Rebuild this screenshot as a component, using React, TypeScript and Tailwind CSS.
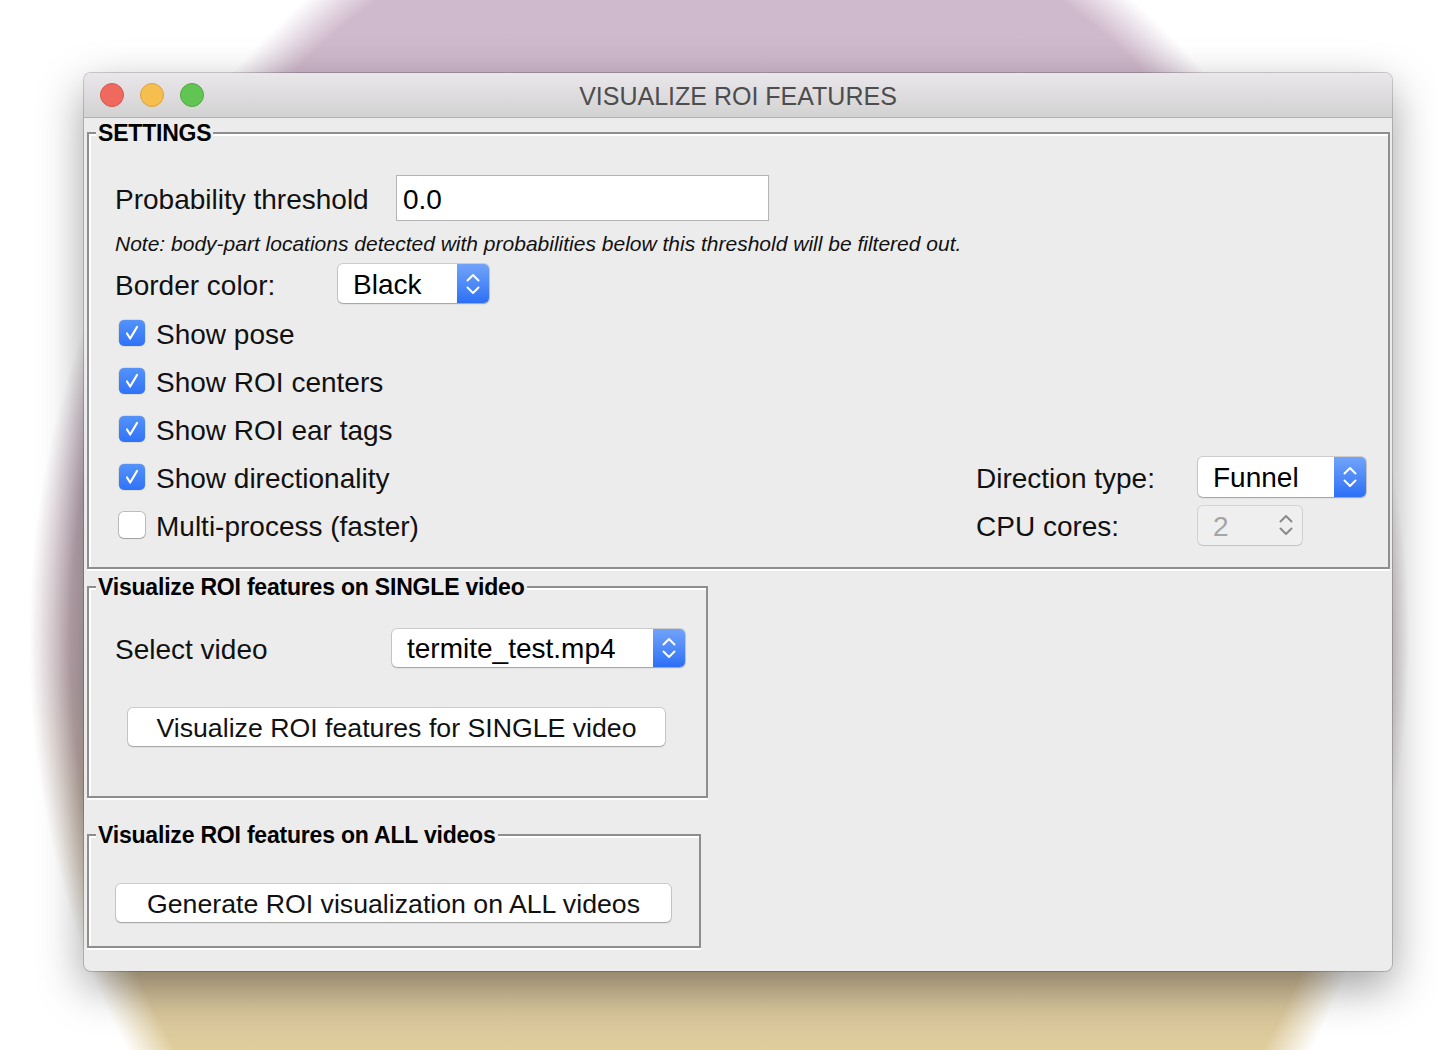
import React from "react";

const font = "font-['Liberation_Sans',Arial,sans-serif]";
const label = "pt-[4px] text-[28px] leading-none text-[#111]";

const Chevrons = ({ color = "#ffffff" }: { color?: string }) => (
  <svg width="14" height="24" viewBox="0 0 14 24" fill="none">
    <path d="M1.5 8.5 L7 3 L12.5 8.5" stroke={color} strokeWidth="2" strokeLinecap="round" strokeLinejoin="round" />
    <path d="M1.5 15.5 L7 21 L12.5 15.5" stroke={color} strokeWidth="2" strokeLinecap="round" strokeLinejoin="round" />
  </svg>
);

const Dropdown = ({ value, className }: { value: string; className: string }) => (
  <div
    className={
      "flex items-stretch rounded-[5px] bg-white shadow-[0_0_0_1px_rgba(0,0,0,0.13),0_1px_1.5px_rgba(0,0,0,0.22)] " +
      className
    }
  >
    <div className="flex flex-1 items-center pl-[15px] pt-[2px] text-[28px] leading-none text-black">{value}</div>
    <div className="flex w-[32px] items-center justify-center rounded-r-[5px] bg-gradient-to-b from-[#71a3f8] to-[#2c6ff6]">
      <Chevrons />
    </div>
  </div>
);

const Checkbox = ({ checked, text }: { checked: boolean; text: string }) => (
  <div className="flex items-center gap-[11px] pl-[6px]">
    {checked ? (
      <div className="flex h-[26px] w-[26px] items-center justify-center rounded-[5px] bg-gradient-to-b from-[#5592f8] to-[#2f72f6] shadow-[0_0_0_0.5px_rgba(0,0,0,0.15)]">
        <svg width="26" height="26" viewBox="0 0 26 26" fill="none">
          <path d="M8 13.5 L11.2 18.5 L18 7" stroke="#fff" strokeWidth="2.2" strokeLinecap="round" strokeLinejoin="round" />
        </svg>
      </div>
    ) : (
      <div className="h-[26px] w-[26px] rounded-[5px] bg-white shadow-[0_0_0_1px_rgba(0,0,0,0.2),0_1px_1px_rgba(0,0,0,0.15)]" />
    )}
    <span className={label}>{text}</span>
  </div>
);

const Group = ({
  title,
  className,
  children,
}: {
  title: string;
  className: string;
  children: React.ReactNode;
}) => (
  <fieldset
    className={
      "border-2 border-[#8e8e8e] shadow-[inset_2px_2px_0_#ffffff,0_2px_0_#ffffff] " + className
    }
  >
    <legend className="ml-[7px] bg-[#ececec] px-[2px] text-[23px] font-bold leading-[26px] tracking-[-0.2px] text-black">
      {title}
    </legend>
    {children}
  </fieldset>
);

const Button = ({ text, className }: { text: string; className: string }) => (
  <button
    type="button"
    className={
      "flex h-[38px] items-center justify-center rounded-[5px] bg-white pt-[3px] text-[26.7px] leading-none text-[#111] shadow-[0_0_0_1px_rgba(0,0,0,0.13),0_1px_1.5px_rgba(0,0,0,0.22)] " +
      className
    }
  >
    {text}
  </button>
);

export default function App() {
  return (
    <div
      className={
        "h-[1050px] w-[1438px] overflow-hidden bg-white bg-[image:radial-gradient(ellipse_690px_800px_at_719px_640px,transparent_94%,#ffffff_100%),linear-gradient(180deg,#cfb9cd_0%,#c9b3c5_35%,#bca8ad_65%,#c9b79f_85%,#e0cd9c_100%)] pl-[84px] pt-[73px] " +
        font
      }
    >
      {/* Window */}
      <div className="h-[898px] w-[1308px] overflow-hidden rounded-[7px] bg-[#ececec] shadow-[0_0_0_1px_rgba(0,0,0,0.18),0_16px_45px_rgba(0,0,0,0.38)]">
        {/* Title bar */}
        <div className="flex h-[45px] items-center border-b border-[#b1b1b1] bg-gradient-to-b from-[#e9e7e9] to-[#d3d2d3] pl-[16px]">
          <div className="flex gap-[16px]">
            <span className="h-[24px] w-[24px] rounded-full border border-[#d9574b] bg-[#ee6a5f]" />
            <span className="h-[24px] w-[24px] rounded-full border border-[#dba340] bg-[#f5be4f]" />
            <span className="h-[24px] w-[24px] rounded-full border border-[#52a942] bg-[#61c554]" />
          </div>
          <div className="flex-1 pr-[120px] pt-[3px] text-center text-[25px] leading-none text-[#4d4d4d]">
            VISUALIZE ROI FEATURES
          </div>
        </div>

        {/* SETTINGS */}
        <Group title="SETTINGS" className="ml-[3px] mt-[2px] w-[1303px]">
          <div className="pb-[18px] pl-[24px] pr-[22px]">
            <div className="mt-[29px] flex h-[46px] items-center">
              <span className={"w-[283px] pl-[2px] " + label}>Probability threshold</span>
              <div className="flex h-[46px] w-[373px] items-center border border-[#b4b4b4] bg-white pl-[6px] pt-[3px] text-[28px] leading-none text-black">
                0.0
              </div>
            </div>
            <p className="mt-[11px] pl-[2px] text-[21px] italic leading-[24px] text-[#111]">
              Note: body-part locations detected with probabilities below this threshold will be filtered out.
            </p>
            <div className="mt-[8px] flex h-[39px] items-center">
              <span className={"w-[225px] pl-[2px] " + label}>Border color:</span>
              <Dropdown value="Black" className="h-[39px] w-[151px]" />
            </div>

            <div className="mt-[6px] flex flex-col">
              <div className="flex h-[48px] items-center">
                <Checkbox checked text="Show pose" />
              </div>
              <div className="flex h-[48px] items-center">
                <Checkbox checked text="Show ROI centers" />
              </div>
              <div className="flex h-[48px] items-center">
                <Checkbox checked text="Show ROI ear tags" />
              </div>
              <div className="flex h-[48px] items-center justify-between">
                <Checkbox checked text="Show directionality" />
                <div className="flex items-center">
                  <span className={"w-[222px] " + label}>Direction type:</span>
                  <Dropdown value="Funnel" className="h-[40px] w-[168px]" />
                </div>
              </div>
              <div className="flex h-[48px] items-center justify-between">
                <Checkbox checked={false} text="Multi-process (faster)" />
                <div className="flex w-[390px] items-center">
                  <span className={"w-[222px] " + label}>CPU cores:</span>
                  <div className="flex h-[39px] w-[104px] items-center justify-between rounded-[5px] bg-[#efefef] pl-[15px] pr-[9px] shadow-[0_0_0_1px_rgba(0,0,0,0.1),0_1px_1px_rgba(0,0,0,0.08)]">
                    <span className="pt-[3px] text-[28px] leading-none text-[#a5a5a5]">2</span>
                    <Chevrons color="#8a8a8a" />
                  </div>
                </div>
              </div>
            </div>
          </div>
        </Group>

        {/* SINGLE video */}
        <Group title="Visualize ROI features on SINGLE video" className="ml-[3px] mt-[5px] w-[621px]">
          <div className="pb-[50px] pl-[24px]">
            <div className="mt-[29px] flex h-[38px] items-center">
              <span className={"w-[279px] pl-[2px] " + label}>Select video</span>
              <Dropdown value="termite_test.mp4" className="h-[38px] w-[293px]" />
            </div>
            <Button text="Visualize ROI features for SINGLE video" className="ml-[15px] mt-[41px] w-[537px]" />
          </div>
        </Group>

        {/* ALL videos */}
        <Group title="Visualize ROI features on ALL videos" className="ml-[3px] mt-[24px] w-[614px]">
          <div className="pb-[24px] pl-[24px]">
            <Button text="Generate ROI visualization on ALL videos" className="ml-[3px] mt-[36px] w-[555px]" />
          </div>
        </Group>
      </div>
    </div>
  );
}
